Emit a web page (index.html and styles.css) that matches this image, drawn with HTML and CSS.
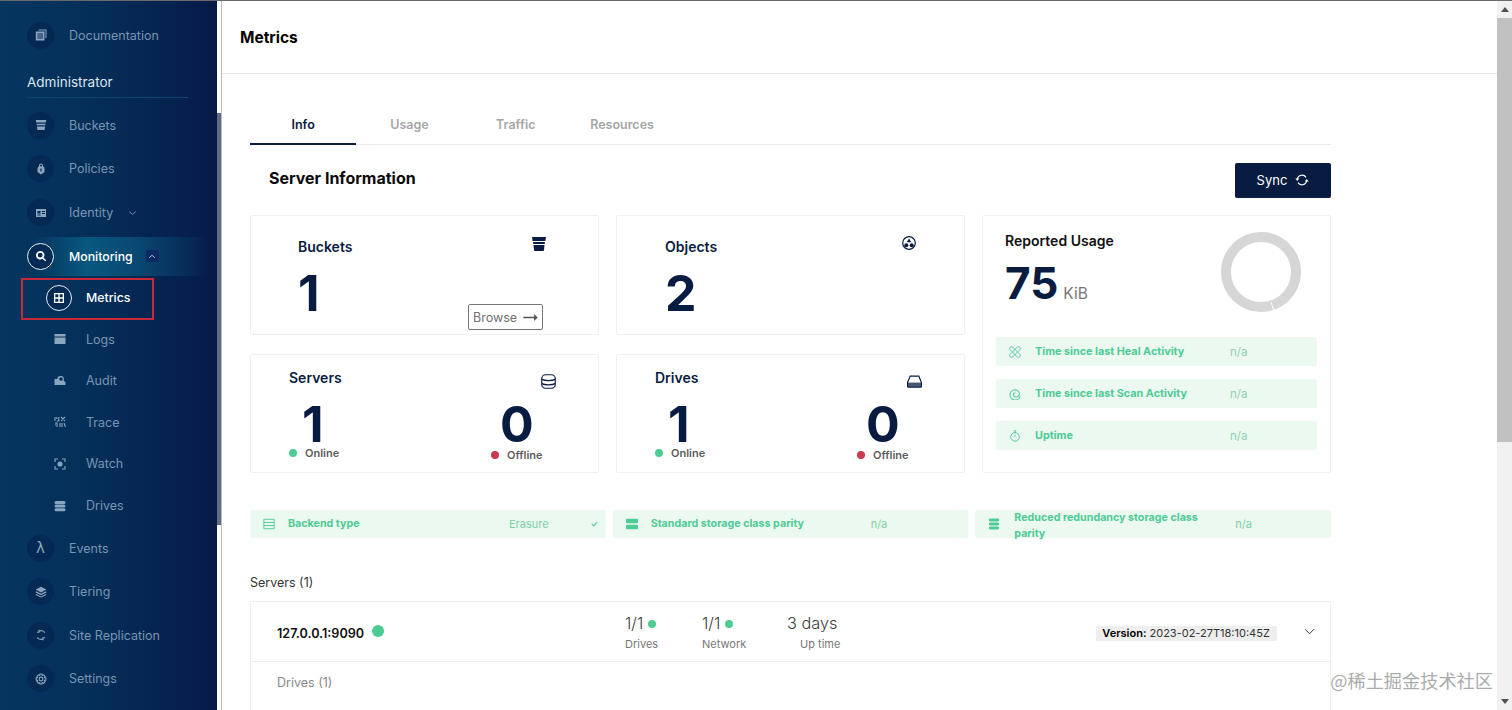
FILE: index.html
```html
<!DOCTYPE html>
<html lang="en">
<head>
<meta charset="utf-8">
<title>Metrics</title>
<link rel="stylesheet" href="styles.css">
</head>
<body>
<div class="app">
  <aside class="sidebar">
    <a class="item"><span class="ico"><svg viewBox="0 0 12 12"><path d="M3.500 .5h8v8.500h-1V1.500H3.500zM.8 2.500h8.700v9H.8zM2.300 4.500h5.700v1H2.300zM2.300 6.500h5.700v1H2.300zM2.300 8.500h5.700v1H2.300z" fill-rule="evenodd"/></svg></span><span>Documentation</span></a>
    <div class="section">Administrator</div>
    <a class="item"><span class="ico"><svg viewBox="0 0 12 12"><path d="M.8 1h10.400l-.4 2.500H1.200zM1.500 4.700h9l-.2 1.600H1.700zM1.900 7.500h8.200l-.5 3.500h-7.200z"/></svg></span><span>Buckets</span></a>
    <a class="item"><span class="ico"><svg viewBox="0 0 12 12"><path d="M4 2.500a2 2 0 0 1 4 0v1c1 .3 1.500 1 1.500 2v3.500L6 11.500 2.500 9V5.500c0-1 .5-1.700 1.500-2zM5 3.200h2v-.7a1 1 0 0 0-2 0zM5.400 5.500v3h1.200v-3z" fill-rule="evenodd"/></svg></span><span>Policies</span></a>
    <a class="item"><span class="ico"><svg viewBox="0 0 12 12"><path d="M1 2h10v8H1zM2.500 4v2.500h3V4zM7 4v1h3V4zM7 6v1h3V6zM2.500 7.500v1h3v-1z" fill-rule="evenodd"/></svg></span><span>Identity</span><svg class="chev" viewBox="0 0 10 6"><path d="M1.500 1.500 5 4.500l3.500-3" fill="none" stroke="currentColor"/></svg></a>
    <a class="item active"><span class="ico ring"><svg viewBox="0 0 12 12"><path d="M5.200 1a4.200 4.200 0 0 1 3.300 6.800l2.700 2.400-1 1-2.700-2.500A4.200 4.200 0 1 1 5.200 1zm0 1.800a2.400 2.400 0 1 0 0 4.800 2.400 2.400 0 0 0 0-4.800z" fill-rule="evenodd"/></svg></span><span class="label-on">Monitoring</span><span class="chev-box"><svg viewBox="0 0 10 6"><path d="M1.500 4.500 5 1.500l3.500 3" fill="none" stroke="currentColor"/></svg></span></a>
    <a class="sub sub-active"><span class="ico ring small"><svg viewBox="0 0 12 12"><path d="M1 1h10v10H1zM2.300 2.300v3h3v-3zM6.700 2.300v3h3v-3zM2.300 6.700v3h3v-3zM6.700 6.700v3h3v-3z" fill-rule="evenodd"/></svg></span><span class="label-on">Metrics</span></a>
    <a class="sub"><span class="ico plain"><svg viewBox="0 0 12 12"><path d="M.500 1h11v2.500H.500zM.500 4.500h11V11H.500z"/></svg></span><span>Logs</span></a>
    <a class="sub"><span class="ico plain"><svg viewBox="0 0 12 12"><path d="M7 1a3 3 0 0 1 2.600 4.500l1.900 1.800V10h-11V4h2.800A3 3 0 0 1 7 1zm0 1.200a1.800 1.800 0 1 0 0 3.600 1.800 1.800 0 0 0 0-3.600z" fill-rule="evenodd"/></svg></span><span>Audit</span></a>
    <a class="sub"><span class="ico plain"><svg viewBox="0 0 12 12" class="lined"><path d="M1 1v4M2.800 1v2M1 7h2v4M4.800 1v4H2.800M7 1l4 4M11 1 7 5M6 7v4M8 7v4M10 7l1.500 4M1 9h1"/></svg></span><span>Trace</span></a>
    <a class="sub"><span class="ico plain"><svg viewBox="0 0 12 12" class="lined"><path d="M4 1H1v3M8 1h3v3M4 11H1V8M8 11h3V8"/><circle cx="6" cy="6" r="2" fill="currentColor"/></svg></span><span>Watch</span></a>
    <a class="sub"><span class="ico plain"><svg viewBox="0 0 12 12"><rect x=".5" y="1" width="11" height="3" rx="1.500"/><rect x=".5" y="4.600" width="11" height="3" rx="1.500"/><rect x=".5" y="8.200" width="11" height="3" rx="1.500"/></svg></span><span>Drives</span></a>
    <a class="item"><span class="ico lambda">λ</span><span>Events</span></a>
    <a class="item"><span class="ico"><svg viewBox="0 0 12 12"><path d="M6 .8 11.300 3.600 6 6.400.7 3.600zM1.200 5.300 6 7.800l4.800-2.500.6 1.100L6 9.200.6 6.400zM1.200 7.900 6 10.400l4.800-2.500.6 1.100L6 11.600.6 9z"/></svg></span><span>Tiering</span></a>
    <a class="item"><span class="ico"><svg viewBox="0 0 12 12" class="lined"><path d="M9.800 3.800A4.200 4.200 0 0 0 3.600 2.500M2.200 8.200a4.200 4.200 0 0 0 6.200 1.300M4 .8v2.400H1.800M8 11.200V8.800h2.200"/></svg></span><span>Site Replication</span></a>
    <a class="item"><span class="ico"><svg viewBox="0 0 12 12" class="lined"><circle cx="6" cy="6" r="1.900"/><path d="M5 1h2l.3 1.400 1.300-.6 1.500 1.500-.7 1.300 1.500.4v2l-1.500.4.700 1.300-1.500 1.500-1.300-.7L7 11H5l-.3-1.500-1.300.7-1.500-1.500.7-1.300L1.100 7V5l1.500-.4-.7-1.300 1.500-1.500 1.300.6z"/></svg></span><span>Settings</span></a>
    <div class="annotation"></div>
  </aside>
  <div class="side-scroll"><div class="side-thumb"></div></div>

  <main class="main">
    <header class="page-head">Metrics</header>
    <div class="content">
      <nav class="tabs">
        <div class="tab tab-on">Info</div>
        <div class="tab">Usage</div>
        <div class="tab">Traffic</div>
        <div class="tab">Resources</div>
      </nav>
      <div class="info-head">
        <h2>Server Information</h2>
        <button class="sync">Sync <svg viewBox="0 0 14 14"><path d="M2.300 6A4.800 4.800 0 0 1 11 4.300M11.700 8A4.800 4.800 0 0 1 3 9.700" fill="none" stroke="currentColor" stroke-width="1.200"/><path d="M.300 5.500h4L2.300 8zM9.700 8.500h4L11.700 6z" fill="currentColor"/></svg></button>
      </div>
      <div class="grid">
        <section class="card buckets">
          <div class="bk-left">
            <div class="card-title">Buckets</div>
            <div class="big">1</div>
          </div>
          <div class="bk-right">
            <svg class="card-ico up3" viewBox="0 0 14 14"><path d="M0 0h14l-.6 4H.6zM1 5h12l-.3 2H1.300zM1.500 8h11l-.5 5a1 1 0 0 1-1 1H3a1 1 0 0 1-1-1z"/></svg>
            <a class="browse">Browse <svg viewBox="0 0 16 10"><path d="M0 4.200h12V1l4 4-4 4V5.800H0z"/></svg></a>
          </div>
        </section>
        <section class="card objects">
          <div class="bk-left">
            <div class="card-title">Objects</div>
            <div class="big">2</div>
          </div>
          <svg class="card-ico lift" viewBox="0 0 14 14"><circle cx="7" cy="7" r="6.300" fill="none" stroke="currentColor" stroke-width="1.200"/><path d="M7 2.500 9.300 6.200H4.700z"/><circle cx="4.300" cy="9.300" r="2"/><circle cx="9.700" cy="9.300" r="2"/></svg>
        </section>
        <section class="card usage">
          <div class="usage-top">
            <div>
              <div class="usage-title">Reported Usage</div>
              <div class="usage-num"><span class="big-75">75</span><span class="kib">KiB</span></div>
            </div>
            <svg class="donut" viewBox="0 0 80 80"><circle cx="40" cy="40" r="35" fill="none" stroke="#d6d6d6" stroke-width="10"/><path d="M50 70 53 79" stroke="#fff" stroke-width="1"/></svg>
          </div>
          <div class="stat-row u-row"><svg class="g-ico" viewBox="0 0 14 14"><path d="M4 1 13 10a2.200 2.200 0 0 1-3 3L1 4a2.200 2.200 0 0 1 3-3zM10 1 1 10a2.200 2.200 0 0 0 3 3l9-9a2.200 2.200 0 0 0-3-3z" fill="none" stroke="currentColor" stroke-width="1.100"/></svg><span class="u-label">Time since last Heal Activity</span><span class="u-val">n/a</span></div>
          <div class="stat-row u-row"><svg class="g-ico" viewBox="0 0 14 14"><path d="M13 9.500A6 6 0 1 1 7 2a5 5 0 0 1 5 5 3.800 3.800 0 0 1-4 3.500A3.300 3.300 0 0 1 5 7a2.500 2.500 0 0 1 2.500-1.500" fill="none" stroke="currentColor" stroke-width="1.200"/></svg><span class="u-label">Time since last Scan Activity</span><span class="u-val">n/a</span></div>
          <div class="stat-row u-row"><svg class="g-ico" viewBox="0 0 14 14"><circle cx="7" cy="8" r="5" fill="none" stroke="currentColor" stroke-width="1.100"/><path d="M5.500 1h3M7 1v3M7 8V5.500" stroke="currentColor" stroke-width="1.100"/></svg><span class="u-label">Uptime</span><span class="u-val">n/a</span></div>
        </section>
        <section class="card count">
          <div class="count-head"><div class="card-title">Servers</div>
            <svg class="card-ico thin" viewBox="0 0 14 14"><rect x=".7" y=".7" width="12.600" height="12.600" rx="3.500" fill="none" stroke="currentColor" stroke-width="1.100"/><path d="M.7 5c3 1.500 9.600 1.500 12.600 0M.7 9c3 1.500 9.600 1.500 12.600 0" fill="none" stroke="currentColor" stroke-width="1.100"/></svg></div>
          <div class="count-body">
            <div class="col"><div class="big">1</div><div class="leg"><i class="dot on"></i>Online</div></div>
            <div class="col"><div class="big">0</div><div class="leg low"><i class="dot off"></i>Offline</div></div>
          </div>
        </section>
        <section class="card count">
          <div class="count-head"><div class="card-title">Drives</div>
            <svg class="card-ico thin" viewBox="0 0 14 12"><path d="M3 1h8l2.500 6v3.500a.8.8 0 0 1-.8.8H1.300a.8.800 0 0 1-.8-.8V7z" fill="none" stroke="currentColor" stroke-width="1.100"/><path d="M.5 7h13v4H.5z" opacity=".75"/></svg></div>
          <div class="count-body">
            <div class="col"><div class="big">1</div><div class="leg"><i class="dot on"></i>Online</div></div>
            <div class="col"><div class="big">0</div><div class="leg low"><i class="dot off"></i>Offline</div></div>
          </div>
        </section>
      </div>
      <div class="triple">
        <div class="stat-row t1"><svg class="g-ico" viewBox="0 0 14 14"><path d="M1 1.500h12v11H1zM1 5.200h12M1 8.800h12" fill="none" stroke="currentColor" stroke-width="1.100"/></svg><span class="t-label w1">Backend type</span><span class="t-val w2">Erasure</span><svg class="check" viewBox="0 0 10 8"><path d="M1 4l2.700 2.700L9 1.200" fill="none" stroke="currentColor" stroke-width="1.500"/></svg></div>
        <div class="stat-row t2"><svg class="g-ico" viewBox="0 0 14 12"><path d="M1 0h12a1 1 0 0 1 1 1v3a1 1 0 0 1-1 1H1a1 1 0 0 1-1-1V1a1 1 0 0 1 1-1zM1 7h12a1 1 0 0 1 1 1v3a1 1 0 0 1-1 1H1a1 1 0 0 1-1-1V8a1 1 0 0 1 1-1z"/></svg><span class="t-label w3">Standard storage class parity</span><span class="t-val">n/a</span></div>
        <div class="stat-row t3"><svg class="g-ico" viewBox="0 0 12 14"><rect y=".5" width="12" height="3.500" rx="1.700"/><rect y="5.200" width="12" height="3.500" rx="1.700"/><rect y="9.900" width="12" height="3.500" rx="1.700"/></svg><span class="t-label w4">Reduced redundancy storage class parity</span><span class="t-val">n/a</span></div>
      </div>
      <div class="servers-title">Servers (1)</div>
      <section class="server">
        <div class="server-row">
          <div class="host">127.0.0.1:9090</div><i class="host-dot"></i>
          <div class="metric m1"><div class="m-top">1/1<i class="dot on m-dot"></i></div><div class="m-sub">Drives</div></div>
          <div class="metric m2"><div class="m-top">1/1<i class="dot on m-dot"></i></div><div class="m-sub">Network</div></div>
          <div class="metric m3"><div class="m-top">3 days</div><div class="m-sub">Up time</div></div>
          <div class="version"><b>Version:</b> 2023-02-27T18:10:45Z</div>
          <svg class="expand" viewBox="0 0 12 8"><path d="M1 1.500 6 6.500l5-5" fill="none" stroke="currentColor" stroke-width="1.100"/></svg>
        </div>
        <div class="server-drives">Drives (1)</div>
      </section>
    </div>
    <div class="watermark">@稀土掘金技术社区</div>
  </main>

  <div class="page-scroll">
    <div class="sb-btn"><svg viewBox="0 0 8 5"><path d="M4 0 8 5H0z"/></svg></div>
    <div class="sb-thumb"></div>
    <div class="sb-fill"></div>
    <div class="sb-btn"><svg viewBox="0 0 8 5"><path d="M0 0h8L4 5z"/></svg></div>
  </div>
</div>
</body>
</html>
```

FILE: styles.css
```css
* { box-sizing: border-box; }
html, body { margin: 0; height: 100%; overflow: hidden; background: #fff; }
body { font-family: Inter, "Liberation Sans", sans-serif; color: #081c42; }
.app { display: flex; height: 710px; border-top: 1px solid #6a6a6a; overflow: hidden; }

/* sidebar */
.sidebar { position: relative; flex: 0 0 217px; padding-top: 12.500px; background: linear-gradient(90deg, #053660 0%, #042e58 45%, #071a48 100%); color: #7896b4; font-size: 12.500px; }
.item, .sub { display: flex; align-items: center; height: 43.600px; padding-left: 27px; }
.sub { height: 41.600px; padding-left: 46px; }
.ico { flex: 0 0 27px; height: 27px; margin-right: 15px; display: flex; align-items: center; justify-content: center; border-radius: 50%; background: rgba(4, 30, 72, .45); color: #8aa5c0; }
.ico svg { width: 12px; height: 12px; fill: currentColor; }
.ico .lined { fill: none; stroke: currentColor; stroke-width: 1.100; }
.ico.plain { background: none; margin-right: 13px; }
.lambda { font-size: 15px; font-family: "DejaVu Sans", sans-serif; }
.section { margin: 15.500px 29px 6px 27px; padding-bottom: 6px; height: 25px; font-size: 13.500px; line-height: 18px; color: #dbe6f0; border-bottom: 1px solid #0d4470; }
.chev { width: 9px; height: 6px; margin-left: 15px; color: #7896b4; }
.active { margin-bottom: -1.200px; background: linear-gradient(90deg, rgba(8,90,125,0) 14%, #07587f 40%, #0a4a74 60%, rgba(8,70,110,0) 96%) center / 100% 39px no-repeat; }
.ring { background: #052a54; border: 1px solid #e8eef4; color: #fff; }
.small { flex-basis: 26px; height: 26px; margin-right: 14px; }
.label-on { color: #fff; font-size: 12.300px; font-weight: 500; }
.chev-box { width: 13px; height: 12px; margin-left: 13px; display: flex; align-items: center; justify-content: center; border-radius: 2px; background: #0b2a60; color: #cfe0ee; }
.chev-box svg { width: 8px; height: 5px; }
.annotation { position: absolute; left: 21px; top: 277px; width: 133px; height: 42px; border: 2px solid #c8283a; }

.side-scroll { flex: 0 0 4px; background: #fff; }
.side-thumb { margin-top: 112px; height: 412px; background: #5f6c84; }

/* main */
.main { position: relative; flex: 1; min-width: 0; border-left: 1px solid #b9bcc4; overflow: hidden; }
.page-head { height: 73px; padding: 28px 0 0 18px; font-size: 15.500px; line-height: 18px; font-weight: 700; color: #000; border-bottom: 1px solid #e8e8e8; }
.content { width: 1081px; margin-left: 28px; }
.tabs { display: flex; height: 41px; margin-top: 30px; border-bottom: 1px solid #eaeaea; }
.tab { width: 106.300px; height: 41px; padding-top: 13px; text-align: center; font-size: 12.500px; line-height: 16px; font-weight: 600; color: #a6a6a6; }
.tab-on { color: #081c42; border-bottom: 2px solid #081c42; }
.info-head { display: flex; justify-content: space-between; align-items: center; padding: 18px 0 0 19px; }
.info-head h2 { margin: 0 0 5px; font-size: 16px; line-height: 20px; font-weight: 700; color: #0a0a0a; }
.sync { display: flex; align-items: center; justify-content: center; gap: 8px; width: 96px; height: 35px; padding: 0 0 1px; border: 0; border-radius: 2px; background: #081c42; color: #fff; font: 400 13px Inter, sans-serif; }
.sync svg { width: 14px; height: 14px; }

.grid { display: grid; grid-template-columns: 349px 349px 349px; grid-template-rows: 120px 119px; column-gap: 17px; row-gap: 19px; margin-top: 17px; }
.card { border: 1px solid #f0f0f0; border-radius: 2px; background: #fff; }
.card-title { font-size: 14px; line-height: 18px; font-weight: 600; color: #081c42; }
.big { font-size: 50px; line-height: 44px; font-weight: 700; color: #081c42; }
.card-ico { flex: 0 0 auto; width: 14px; height: 14px; fill: currentColor; color: #081c42; }
.buckets { display: flex; justify-content: space-between; padding: 22px 55px 4px 47px; }
.bk-left .big { margin-top: 15px; }
.bk-right { display: flex; flex-direction: column; justify-content: space-between; align-items: flex-end; }
.up3 { margin: -1px -3px 0 0; }
.browse { display: flex; align-items: center; justify-content: center; gap: 6px; width: 75px; height: 26px; border: 1px solid #777; border-radius: 2px; font-size: 12.500px; color: #707070; }
.browse svg { width: 15px; height: 9px; fill: #555; }
.objects { display: flex; justify-content: space-between; padding: 22px 48px 0 48px; }
.lift { margin-top: -2px; }

.usage { grid-row: 1 / span 2; grid-column: 3; padding: 16px 13px 0; }
.usage-top { display: flex; justify-content: space-between; padding: 0 16px 0 9px; height: 105px; }
.usage-title { font-size: 14px; line-height: 18px; font-weight: 600; color: #111; }
.usage-num { display: flex; align-items: baseline; margin-top: 9px; }
.big-75 { font-size: 44px; line-height: 48px; font-weight: 700; color: #081c42; }
.kib { margin-left: 5px; font-size: 15.500px; color: #777; }
.donut { width: 80px; height: 80px; }
.stat-row { display: flex; align-items: center; background: #ebf9f0; color: #4ecb96; border-radius: 2px; }
.u-row { height: 29px; margin-bottom: 13px; padding-left: 13px; }
.g-ico { flex: 0 0 auto; width: 12px; height: 12px; fill: currentColor; }
.u-label { width: 195px; margin-left: 14px; font-size: 10.800px; font-weight: 700; white-space: nowrap; }
.u-val { font-size: 11.500px; color: #8fcfae; }

.count { padding: 14px 42px 0 38px; }
.count-head { display: flex; justify-content: space-between; }
.thin { width: 15px; height: 15px; margin-top: 5px; }
.count-body { display: flex; margin-top: 15px; }
.col { flex: 0 0 202px; }
.col:last-child { flex: 1 1 auto; }
.col .big { line-height: 40px; padding-left: 13px; }
.col:last-child .big { padding-left: 9px; }
.leg { display: flex; align-items: center; margin-top: 2px; font-size: 11px; line-height: 14px; font-weight: 600; color: #5c5c5c; }
.low { margin-top: 4px; }
.dot { display: inline-block; width: 8px; height: 8px; margin-right: 8px; border-radius: 50%; }
.on { background: #4ccb92; }
.off { background: #c83b51; }

.triple { display: grid; grid-template-columns: repeat(3, 1fr); gap: 7px; margin-top: 37px; }
.triple .stat-row { height: 28px; padding-left: 13px; font-size: 10.700px; }
.t-label { margin-left: 13px; font-weight: 700; line-height: 16px; }
.t-val { font-size: 11px; color: #7fd0a5; }
.w1 { width: 221px; }
.w2 { width: 82px; }
.w3 { width: 220px; }
.w4 { width: 221px; margin: 3px 0 0 14px; padding-right: 30px; }
.t3 { padding-left: 12px; }
.check { width: 7px; height: 6px; color: #4ecb96; }

.servers-title { margin-top: 37px; font-size: 12.500px; line-height: 16px; color: #333; }
.server { margin-top: 10px; height: 130px; border: 1px solid #efefef; border-bottom: 0; }
.server-row { display: flex; align-items: center; height: 60px; padding-left: 26px; border-bottom: 1px solid #efefef; }
.host { font-size: 12.600px; font-weight: 600; color: #111; margin-top: 3px; }
.host-dot { width: 12px; height: 12px; margin: 0 0 2px 8px; border-radius: 50%; background: #4ccb92; }
.metric { font-size: 11px; color: #777; }
.m-top { display: flex; align-items: center; font-size: 16px; line-height: 22px; color: #3a3a3a; font-weight: 300; }
.m-dot { margin: 1px 0 0 5px; }
.m-sub { margin-top: 4px; font-size: 11px; line-height: 13px; color: #777; }
.m1 { width: 77px; margin-left: 241px; }
.m2 { width: 85px; }
.m3 { width: 308.500px; }
.m3 .m-top { font-size: 16.300px; }
.m3 .m-sub { padding-left: 13px; }
.version { width: 181px; height: 15px; margin-top: 4px; text-align: center; font-size: 11px; line-height: 15px; color: #333; background: #eeeeee; }
.version b { color: #000; font-weight: 600; }
.expand { width: 11px; height: 7px; margin: 0 0 0 27px; color: #333; }
.server-drives { padding: 13px 0 0 26px; font-size: 12.500px; line-height: 16px; color: #888; }

.watermark { position: absolute; right: 4px; top: 669px; font-family: "Noto Sans CJK SC", sans-serif; font-size: 18.200px; line-height: 20px; font-weight: 400; color: #ababab; }

.page-scroll { flex: 0 0 15px; display: flex; flex-direction: column; background: #f1f1f1; }
.sb-btn { flex: 0 0 17px; display: flex; align-items: center; justify-content: center; }
.sb-btn svg { width: 8px; height: 5px; fill: #505050; }
.sb-thumb { flex: 0 0 424px; background: #c1c1c1; }
.sb-fill { flex: 1; }
```
